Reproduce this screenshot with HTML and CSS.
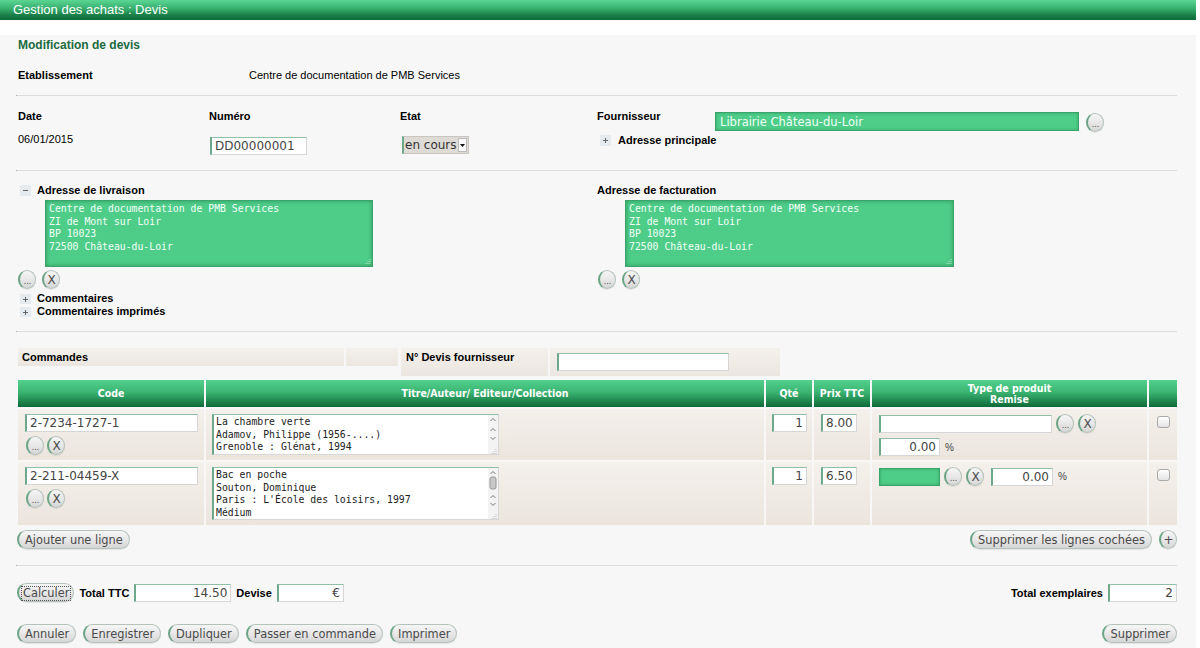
FILE: index.html
```html
<!DOCTYPE html>
<html lang="fr">
<head>
<meta charset="utf-8">
<title>Gestion des achats : Devis</title>
<link rel="stylesheet" href="styles.css">
</head>
<body>
<div class="page">
  <div class="titlebar">Gestion des achats : Devis</div>
  <div class="panel">
    <div class="form-title">Modification de devis</div>
    <div class="etab"><span class="lbl etab-lbl">Etablissement</span><span>Centre de documentation de PMB Services</span></div>
    <div class="sep"></div>

    <div class="info">
      <div class="col col-a"><div class="lbl">Date</div><div class="date">06/01/2015</div></div>
      <div class="col col-a"><div class="lbl">Numéro</div><input class="field num" type="text" value="DD00000001"></div>
      <div class="col col-b"><div class="lbl">Etat</div>
        <div class="select"><span class="sel-text">en cours</span><span class="sel-arrow"><svg width="5" height="3" viewBox="0 0 5 3"><path d="M0 0h5L2.5 3z" fill="#111"/></svg></span></div>
      </div>
      <div class="col col-four">
        <div class="four-row">
          <span class="lbl four-lbl">Fournisseur</span>
          <input class="gfield four-in" type="text" value="Librairie Château-du-Loir">
          <button class="circ dots">...</button>
        </div>
        <div class="toggle tog-princ"><span class="pm"><svg width="11" height="11" viewBox="0 0 11 11"><path d="M3 5.5h5M5.5 3v5" stroke="#666" stroke-width="1"/></svg></span><span class="lbl">Adresse principale</span></div>
      </div>
    </div>
    <div class="sep"></div>

    <div class="addr">
      <div class="acol acol-liv">
        <div class="toggle"><span class="pm"><svg width="11" height="11" viewBox="0 0 11 11"><path d="M3 5.5h5" stroke="#666" stroke-width="1"/></svg></span><span class="lbl">Adresse de livraison</span></div>
        <div class="gta">Centre de documentation de PMB Services<br>ZI de Mont sur Loir<br>BP 10023<br>72500 Château-du-Loir<svg class="grip" width="7" height="7" viewBox="0 0 7 7"><path d="M6 1v1M4 3v1M6 3v1M2 5v1M4 5v1M6 5v1" stroke="#b8e8cc" stroke-width="1"/></svg></div>
        <div class="cbtns"><button class="circ dots">...</button><button class="circ">X</button></div>
        <div class="toggle tog-com"><span class="pm"><svg width="11" height="11" viewBox="0 0 11 11"><path d="M3 5.5h5M5.5 3v5" stroke="#666" stroke-width="1"/></svg></span><span class="lbl">Commentaires</span></div>
        <div class="toggle tog-com"><span class="pm"><svg width="11" height="11" viewBox="0 0 11 11"><path d="M3 5.5h5M5.5 3v5" stroke="#666" stroke-width="1"/></svg></span><span class="lbl">Commentaires imprimés</span></div>
      </div>
      <div class="acol acol-fac">
        <div class="toggle"><span class="lbl">Adresse de facturation</span></div>
        <div class="gta">Centre de documentation de PMB Services<br>ZI de Mont sur Loir<br>BP 10023<br>72500 Château-du-Loir<svg class="grip" width="7" height="7" viewBox="0 0 7 7"><path d="M6 1v1M4 3v1M6 3v1M2 5v1M4 5v1M6 5v1" stroke="#b8e8cc" stroke-width="1"/></svg></div>
        <div class="cbtns"><button class="circ dots">...</button><button class="circ">X</button></div>
      </div>
    </div>
    <div class="sep"></div>

    <div class="cmd">
      <div class="cmd-a">
        <div class="bcell c-cmd lbl">Commandes</div>
        <div class="bcell c-empty"></div>
      </div>
      <div class="cmd-b">
        <div class="bcell c-ndev lbl">N° Devis fournisseur</div>
        <div class="bcell c-nin"><input class="field ndev-in" type="text" value=""></div>
      </div>
    </div>

    <table class="lines">
      <thead>
        <tr>
          <th class="w-code">Code</th>
          <th class="w-titre">Titre/Auteur/ Editeur/Collection</th>
          <th class="w-qte">Qté</th>
          <th class="w-prix">Prix TTC</th>
          <th class="w-type">Type de produit<br>Remise</th>
          <th class="w-chk"></th>
        </tr>
      </thead>
      <tbody>
        <tr class="r1">
          <td>
            <input class="field code-in" type="text" value="2-7234-1727-1">
            <div class="cbtns small"><button class="circ dots">...</button><button class="circ">X</button></div>
          </td>
          <td>
            <div class="ta ta1">
              <div class="ta-text">La chambre verte<br>Adamov, Philippe (1956-....)<br>Grenoble : Glénat, 1994</div>
              <div class="sb"><svg width="10" height="39" viewBox="0 0 10 39"><path d="M2.5 6l2.5-2.5L7.5 6M2.5 16l2.5-2.5L7.5 16M2.5 22l2.5 2.5L7.5 22" stroke="#777" fill="none" stroke-width="1"/><path d="M8 34v1M6 36v1M8 36v1M4 38v1M6 38v1M8 38v1" stroke="#bbb"/></svg></div>
            </div>
          </td>
          <td><input class="field qte-in" type="text" value="1"></td>
          <td><input class="field prix-in" type="text" value="8.00"></td>
          <td>
            <div class="type-row">
              <input class="field type-in" type="text" value="">
              <button class="circ dots">...</button><button class="circ">X</button>
            </div>
            <div class="type-row rem-row"><input class="field rem-in" type="text" value="0.00"><span class="pct">%</span></div>
          </td>
          <td class="chk-cell"><span class="chk"></span></td>
        </tr>
        <tr class="r2">
          <td>
            <input class="field code-in" type="text" value="2-211-04459-X">
            <div class="cbtns small"><button class="circ dots">...</button><button class="circ">X</button></div>
          </td>
          <td>
            <div class="ta ta2">
              <div class="ta-text">Bac en poche<br>Souton, Dominique<br>Paris : L'École des loisirs, 1997<br>Médium</div>
              <div class="sb"><svg width="10" height="51" viewBox="0 0 10 51"><path d="M2.5 6l2.5-2.5L7.5 6" stroke="#777" fill="none"/><rect x="2" y="9" width="6" height="12" rx="2" fill="#c8c8c8" stroke="#999"/><path d="M2.5 30l2.5-2.5L7.5 30M2.5 35l2.5 2.5L7.5 35" stroke="#777" fill="none"/><path d="M8 46v1M6 48v1M8 48v1M4 50v1M6 50v1M8 50v1" stroke="#bbb"/></svg></div>
            </div>
          </td>
          <td><input class="field qte-in" type="text" value="1"></td>
          <td><input class="field prix-in" type="text" value="6.50"></td>
          <td>
            <div class="type-row">
              <input class="gfield gtype-in" type="text" value="">
              <button class="circ dots">...</button><button class="circ">X</button>
              <input class="field rem-in rem2" type="text" value="0.00"><span class="pct">%</span>
            </div>
          </td>
          <td class="chk-cell"><span class="chk"></span></td>
        </tr>
      </tbody>
    </table>

    <div class="actions-line">
      <button class="btn">Ajouter une ligne</button>
      <div class="right-btns"><button class="btn">Supprimer les lignes cochées</button><button class="circ plus-c">+</button></div>
    </div>
    <div class="sep"></div>

    <div class="totals">
      <div class="tot-left">
        <button class="btn calc"><span class="focus">Calculer</span></button>
        <span class="lbl">Total TTC</span>
        <input class="field tot-in" type="text" value="14.50">
        <span class="lbl">Devise</span>
        <input class="field dev-in" type="text" value="€">
      </div>
      <div class="tot-right">
        <span class="lbl">Total exemplaires</span>
        <input class="field ex-in" type="text" value="2">
      </div>
    </div>

    <div class="bottom">
      <div class="bl">
        <button class="btn">Annuler</button>
        <button class="btn">Enregistrer</button>
        <button class="btn">Dupliquer</button>
        <button class="btn">Passer en commande</button>
        <button class="btn">Imprimer</button>
      </div>
      <button class="btn">Supprimer</button>
    </div>
  </div>
</div>
</body>
</html>
```

FILE: styles.css
```css
* { box-sizing: border-box; }
html, body { margin: 0; padding: 0; background: #ffffff; }
body {
  font-family: "Liberation Sans", Arial, sans-serif;
  font-size: 11px;
  color: #000;
}
.page { width: 1196px; }

.titlebar {
  height: 20px;
  line-height: 20px;
  padding-left: 13px;
  font-size: 13px;
  color: #ffffff;
  background: linear-gradient(to bottom, #5ad692 0%, #36ad6d 45%, #1a8048 75%, #0f6a3a 100%);
}

.panel {
  margin-top: 15px;
  background: #f7f7f7;
  padding: 0 19px 6px 18px;
  height: 613px;
}

.lbl { font-weight: bold; }

.form-title {
  height: 20px;
  line-height: 20px;
  font-size: 12px;
  font-weight: bold;
  color: #1b6b3f;
}
.etab { display: flex; margin-top: 12px; line-height: 16px; padding-bottom: 12px; }
.etab-lbl { width: 231px; }

.sep {
  height: 1px;
  background: #dcdcdc;
  margin: 0 0 0 -2px;
  border-left: 1px solid #b0b0b0;
}

/* info */
.info { display: flex; padding: 13px 0 15px; }
.col .lbl { line-height: 14px; }
.col-a { width: 191px; }
.col-b { width: 197px; }
.col-four { flex: 1; }
.date { margin-top: 9px; line-height: 14px; }

.field {
  display: block;
  height: 18px;
  padding: 0 3px;
  margin: 0;
  font-family: "DejaVu Sans", sans-serif;
  font-size: 12px;
  color: #444;
  background: #ffffff;
  border: 1px solid #d6d6d6;
  border-top-color: #8fbfa6;
  border-left: 2px solid #6ea88a;
  outline: none;
}
.num { width: 97px; margin-top: 14px; margin-left: 1px; }

.select {
  margin-top: 13px;
  margin-left: 2px;
  display: flex;
  align-items: center;
  width: 67px;
  height: 18px;
  background: #dedbd6;
  border: 1px solid #c9c6c1;
  border-left: 2px solid #6ea88a;
  font-family: "DejaVu Sans", sans-serif;
  font-size: 12px;
  color: #333;
}
.sel-text { flex: 1; padding-left: 1px; line-height: 16px; }
.sel-arrow {
  width: 9px;
  height: 14px;
  margin-right: 1px;
  background: #f8f8f8;
  border: 1px solid #bbb;
  display: flex;
  align-items: center;
  justify-content: center;
}

.four-row { display: flex; align-items: flex-start; }
.four-lbl { width: 118px; line-height: 14px; }
.gfield {
  display: block;
  margin: 0;
  height: 19px;
  padding: 0 4px;
  font-family: "DejaVu Sans", sans-serif;
  font-size: 11.5px;
  color: #f2fff7;
  background: #4ecd89;
  border: 1px solid #3aa56b;
  box-shadow: inset 0 0 3px rgba(0, 70, 30, 0.35);
  outline: none;
}
.four-in { width: 364px; margin-top: 3px; }
.four-row .circ { margin-top: 4px; margin-left: 7px; }

.toggle { display: flex; align-items: center; line-height: 14px; }
.pm {
  width: 11px;
  height: 11px;
  background: #e5eaee;
  margin-right: 8px;
  display: flex;
}
.tog-princ { margin-top: 1px; margin-left: 3px; }
.tog-princ .pm { margin-right: 7px; }

/* buttons */
.btn, .circ {
  font-family: "DejaVu Sans", sans-serif;
  font-size: 11.4px;
  color: #4a4a4a;
  height: 19px;
  margin: 0;
  padding: 0 6px;
  line-height: 16px;
  border-radius: 10px;
  border: 1px solid #b4c2ba;
  border-left: 2px solid #6aa385;
  background: linear-gradient(to bottom, #f6f6f6 0%, #e6e6e6 55%, #d6d6d6 100%);
  box-shadow: 0 1px 1px rgba(0, 0, 0, 0.08);
  cursor: pointer;
}
.circ {
  width: 18px;
  height: 19px;
  padding: 0;
  border-radius: 50%;
  font-size: 12px;
  text-align: center;
  display: inline-flex;
  align-items: center;
  justify-content: center;
}
.circ.dots { font-size: 8px; padding-top: 4px; }

/* addresses */
.addr { display: flex; padding: 12px 0 13px; }
.acol-liv { width: 579px; }
.acol-fac { flex: 1; }
.acol-liv .pm { margin-left: 2px; margin-right: 6px; }
.gta {
  position: relative;
  margin: 3px 0 0 27px;
  width: 328px;
  height: 67px;
  padding: 2px 3px;
  font-family: "DejaVu Sans Mono", monospace;
  font-size: 9.8px;
  line-height: 12.5px;
  color: #f2fff7;
  background: #4ecd89;
  border: 1px solid #3aa56b;
  box-shadow: inset 0 0 4px rgba(0, 70, 30, 0.4);
  white-space: nowrap;
}
.acol-fac .gta { margin-left: 28px; width: 329px; }
.grip { position: absolute; right: 1px; bottom: 1px; }
.cbtns { display: flex; gap: 6px; margin-top: 3px; }
.acol-fac .cbtns { margin-left: 1px; }
.tog-com { line-height: 13px; }
.cbtns + .tog-com { margin-top: 3px; }
.tog-com .pm { height: 10px; margin-left: 2px; margin-right: 6px; }

/* commandes */
.cmd { display: flex; align-items: flex-start; margin-top: 16px; }
.cmd-a { display: flex; gap: 2px; }
.cmd-b { display: flex; gap: 2px; margin-left: 3px; }
.bcell { background: linear-gradient(to bottom, #f4f0eb, #ebe6e0); }
.c-cmd { width: 326px; height: 18px; line-height: 18px; padding-left: 4px; }
.c-empty { width: 52px; height: 18px; }
.c-ndev { width: 147px; height: 28px; line-height: 18px; padding-left: 5px; }
.c-nin { width: 230px; height: 28px; padding: 5px 0 0 7px; }
.ndev-in { width: 172px; }

/* table */
.lines {
  margin: 2px 0 0 -2px;
  border-collapse: separate;
  border-spacing: 2px;
  table-layout: fixed;
  width: 1163px;
}
.lines th {
  height: 27px;
  padding: 0;
  font-family: "DejaVu Sans Condensed", "DejaVu Sans", sans-serif;
  font-size: 10.5px;
  font-weight: bold;
  color: #ffffff;
  line-height: 11px;
  background: linear-gradient(to bottom, #52d18d 0%, #3bb472 45%, #1d844c 80%, #0e6a39 100%);
}
.w-code { width: 186px; }
.w-titre { width: 558px; }
.w-qte { width: 46px; }
.w-prix { width: 56px; }
.w-type { width: 275px; }
.w-chk { width: 28px; }

.lines td {
  vertical-align: top;
  padding: 5px 0 0 7px;
  background: linear-gradient(to bottom, #f4f0eb, #ebe5de);
}
.r1 td { height: 51px; }
.r2 td { height: 63px; }
.code-in { width: 173px; }
.cbtns.small { margin-top: 4px; margin-left: 1px; gap: 3px; }

.lines td:nth-child(2) { padding-left: 6px; }
.ta {
  display: flex;
  width: 287px;
  background: #fff;
  border: 1px solid #d6d6d6;
  border-top-color: #8fbfa6;
  border-left: 2px solid #6ea88a;
}
.ta1 { height: 41px; }
.ta2 { height: 53px; }
.ta-text {
  flex: 1;
  padding: 1px 2px;
  font-family: "DejaVu Sans Mono", monospace;
  font-size: 9.8px;
  line-height: 12.7px;
  color: #222;
  white-space: nowrap;
  overflow: hidden;
}
.sb { width: 10px; background: #f3f3f3; }

.lines td:nth-child(3) { padding-left: 6px; }
.qte-in { width: 35px; text-align: right; }
.prix-in { width: 36px; }
.type-row { display: flex; align-items: center; gap: 2px; }
.type-in { width: 173px; }
.type-row .circ { margin-left: 2px; }
.rem-row { margin-top: 5px; }
.rem-in { width: 61px; text-align: right; }
.pct { font-size: 10px; color: #444; margin-left: 3px; }
.gtype-in { width: 61px; height: 18px; }
.type-row .rem2 { margin-left: 5px; width: 62px; }

.chk-cell { text-align: left; }
.lines td.chk-cell { padding: 7px 0 0 8px; }
.chk {
  display: block;
  width: 13px;
  height: 12px;
  border: 1px solid #a9a9a9;
  border-radius: 3px;
  background: linear-gradient(to bottom, #ffffff, #e4e4e4);
}

/* actions */
.actions-line {
  display: flex;
  justify-content: space-between;
  align-items: center;
  margin-top: 3px;
  margin-left: -1px;
  padding-bottom: 16px;
}
.right-btns { display: flex; gap: 7px; align-items: center; }
.plus-c { font-size: 12px; }

.totals {
  display: flex;
  justify-content: space-between;
  align-items: center;
  margin-top: 17px;
}
.tot-left, .tot-right { display: flex; align-items: center; gap: 5px; }
.tot-left { margin-left: -1px; }
.tot-in { width: 97px; text-align: right; }
.dev-in { width: 67px; text-align: right; }
.ex-in { width: 69px; text-align: right; }
.calc { padding: 0 2px; }
.focus { border: 1px dotted #555; padding: 0 1px; line-height: 13px; display: inline-block; }

.bottom {
  display: flex;
  justify-content: space-between;
  align-items: center;
  margin-top: 22px;
  margin-left: -1px;
}
.bl { display: flex; gap: 7px; }
```
